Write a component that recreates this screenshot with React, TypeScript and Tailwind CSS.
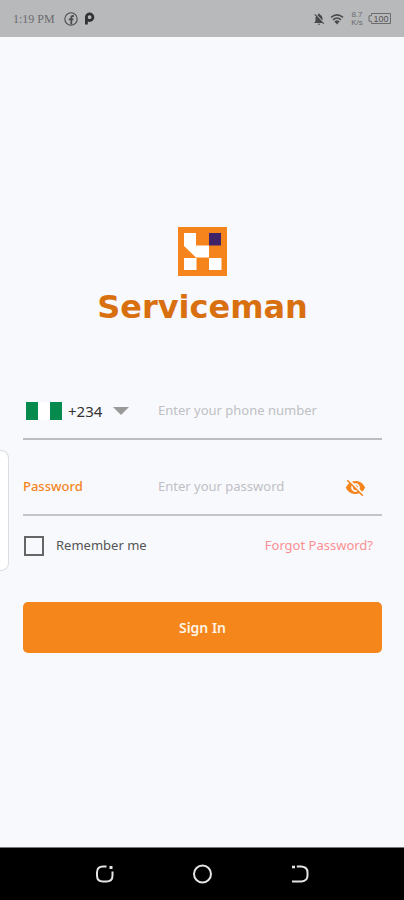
import React, { useState } from "react";
import { MdNotificationsOff, MdVisibility, MdVisibilityOff } from "react-icons/md";

const StatusBar: React.FC = () => (
  <header className="flex h-[37px] items-center justify-between bg-[#b8b9bb] px-[13px] text-[#6b6b6d]">
    <div className="flex items-center">
      <span className="w-[51px] whitespace-nowrap font-['Liberation_Serif',serif] text-[12px]">
        1:19 PM
      </span>
      {/* Facebook */}
      <svg viewBox="0 0 14 14" className="h-[14px] w-[14px]" fill="none" stroke="#4c4c4e">
        <circle cx="7" cy="7" r="6.2" strokeWidth="1.1" />
        <path d="M9.8 4H8.800Q7.300 4 7.300 5.500V12.500M4.800 7.400H9.500" strokeWidth="1.800" />
      </svg>
      {/* Rounded P app mark */}
      <svg viewBox="0 0 11 13" className="ml-[6px] h-[13px] w-[11px]" fill="none" stroke="#333335" strokeWidth="2.800">
        <path d="M2.400 12.500V5.500" />
        <circle cx="5.600" cy="5.200" r="3.300" />
      </svg>
    </div>
    <div className="flex items-center">
      <MdNotificationsOff className="h-[14px] w-[14px] text-[#48484a]" />
      <svg viewBox="0 0 14 12" className="ml-1 h-3 w-[14px]" fill="none" stroke="#4c4c4e" strokeWidth="1.6">
        <path d="M1 4.400Q7-.8 13 4.400M3 6.800Q7 3.200 11 6.800" />
        <path d="M4.400 8.400Q7 6.200 9.600 8.400L7 11.400Z" fill="#4c4c4e" stroke="none" />
      </svg>
      <span className="ml-[6px] w-[14px] text-center font-['Liberation_Sans',sans-serif] text-[8px] leading-[8px]">
        8.7 K/s
      </span>
      <svg viewBox="0 0 23 11" className="ml-1 h-[11px] w-[23px]" fill="none" stroke="#6b6b6d">
        <path d="M3.500 .5H22.500V10.500H3.500V8.200H1V2.800H3.500Z" />
        <text
          x="13"
          y="8.500"
          textAnchor="middle"
          className="font-['Liberation_Sans',sans-serif] text-[9px]"
          fill="#555557"
          stroke="none"
        >
          100
        </text>
      </svg>
    </div>
  </header>
);

const Logo: React.FC = () => (
  <div className="flex flex-col items-center">
    <svg viewBox="0 0 49 49" className="h-[49px] w-[49px]">
      <path fill="#f5841c" d="M0 0H49V49H0Z" />
      <path fill="#fff" d="M6 6H18V18.500H31V30.500H18L6 19Z" />
      <path fill="#fff" d="M6 31H18.500V43H6ZM31 31H43.500V43H31Z" />
      <path fill="#402268" d="M31 6H43V18.500H31Z" />
    </svg>
    <h1 className="mt-[11px] font-['DejaVu_Sans',sans-serif] text-[32px] font-bold leading-10 text-[#d97010]">
      Serviceman
    </h1>
  </div>
);

const NavBar: React.FC = () => (
  <nav className="flex h-[53px] items-center justify-center gap-[78px] border-t border-[#777] bg-black text-[#e4e4e4]">
    <button type="button" aria-label="Recent apps">
      <svg viewBox="0 0 20 20" className="h-5 w-5" fill="none" stroke="currentColor" strokeWidth="2">
        <path d="M12.500 2.500H9Q3 2.500 3 8.500V11.500Q3 17.500 9 17.500H12.500Q18.500 17.500 18.500 11.500V7.500" />
        <path d="M15.500 3.500H18.500" strokeWidth="3" />
      </svg>
    </button>
    <button type="button" aria-label="Home">
      <svg viewBox="0 0 20 20" className="h-5 w-5" fill="none" stroke="currentColor" strokeWidth="2">
        <circle cx="10.500" cy="10" r="8.500" />
      </svg>
    </button>
    <button type="button" aria-label="Back">
      <svg viewBox="0 0 20 20" className="h-5 w-5" fill="none" stroke="currentColor" strokeWidth="2">
        <path d="M6.800 2.500H11.500Q17.500 3 17.500 8.500V11.500Q17.500 17 11.500 17.500H2" />
        <path d="M2 3H5" strokeWidth="2.600" />
      </svg>
    </button>
  </nav>
);

const App: React.FC = () => {
  const [showPassword, setShowPassword] = useState(false);

  return (
    <div className="relative flex min-h-screen flex-col bg-[#f8f9fd] font-['Noto_Sans',sans-serif]">
      <StatusBar />

      {/* Edge panel handle */}
      <div className="absolute left-0 top-1/2 h-[121px] w-[9px] rounded-r-lg border border-l-0 border-[#dcdde0] bg-white" />

      <main className="flex flex-1 flex-col justify-center pb-1 pl-[23px] pr-[22px]">
        <Logo />

        <form className="mt-[57px] flex flex-col" onSubmit={(e) => e.preventDefault()}>
          <div className="flex h-[56px] items-center border-b-2 border-[#bcbdc0]">
            <div className="relative flex w-[135px] shrink-0 items-center pl-[3px]">
              <svg viewBox="0 0 36 18" className="h-[18px] w-9">
                <path fill="#fff" d="M12 0H24V18H12Z" />
                <path fill="#078a4e" d="M0 0H12V18H0ZM24 0H36V18H24Z" />
              </svg>
              <select
                aria-label="Country code"
                className="ml-[6px] w-[62px] appearance-none bg-transparent text-[15px] text-[#333]"
              >
                <option>+234</option>
              </select>
              <svg viewBox="0 0 16 8" className="pointer-events-none absolute left-[90px] h-2 w-4">
                <path fill="#999" d="M0 0H16L8 8Z" />
              </svg>
            </div>
            <input
              type="tel"
              aria-label="Phone number"
              placeholder="Enter your phone number"
              className="min-w-0 flex-1 bg-transparent text-[13px] outline-none placeholder:text-[#bfc0c3]"
            />
          </div>

          <div className="mt-5 flex h-[56px] items-center border-b-2 border-[#c4c5c8]">
            <label htmlFor="password" className="w-[135px] shrink-0 text-[13px] font-medium text-[#f5841c]">
              Password
            </label>
            <input
              id="password"
              type={showPassword ? "text" : "password"}
              placeholder="Enter your password"
              className="min-w-0 flex-1 bg-transparent text-[13px] outline-none placeholder:text-[#bfc0c3]"
            />
            <button
              type="button"
              aria-label="Toggle password visibility"
              className="mr-4 text-[#f5841c]"
              onClick={() => setShowPassword(!showPassword)}
            >
              {showPassword ? <MdVisibility size={21} /> : <MdVisibilityOff size={21} />}
            </button>
          </div>

          <div className="mt-5 flex items-center justify-between pr-[9px] text-[13px]">
            <label className="flex items-center gap-3 text-[#555]">
              <input
                type="checkbox"
                className="ml-px h-5 w-5 appearance-none border-2 border-[#666] checked:bg-[#f5841c]"
              />
              Remember me
            </label>
            <a href="#forgot" className="text-[#fb8f93]">
              Forgot Password?
            </a>
          </div>

          <button
            type="submit"
            className="mt-[46px] h-[51px] rounded-[5px] bg-[#f5861c] text-[14px] font-semibold text-[#fff3e6]"
          >
            Sign In
          </button>
        </form>
      </main>

      <NavBar />
    </div>
  );
};

export default App;
